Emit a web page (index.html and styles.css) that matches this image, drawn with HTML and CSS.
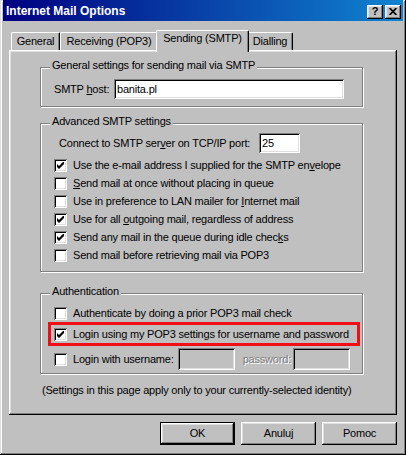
FILE: index.html
```html
<!DOCTYPE html>
<html>
<head>
  <title>Internet Mail Options</title>
  <link rel="stylesheet" href="styles.css">
</head>
<body>
  <div class="window">
    <div class="title-bar">
      <span class="title-text">Internet Mail Options</span>
      <div class="title-buttons">
        <span class="title-button">?</span>
        <span class="title-button">
          <svg width="8" height="7" viewBox="0 0 8 7"><path d="M0.6 0 L7.4 7 M7.4 0 L0.6 7" stroke="#000" stroke-width="1.7" fill="none"/></svg>
        </span>
      </div>
    </div>

    <div class="dialog-body">
      <div class="tab-strip">
        <div class="tab tab-general">General</div>
        <div class="tab tab-receiving">Receiving (POP3)</div>
        <div class="tab tab-sending active">Sending (SMTP)</div>
        <div class="tab tab-dialling">Dialling</div>
      </div>

      <div class="tab-panel">
        <div class="group group-general">
          <span class="group-label">General settings for sending mail via SMTP</span>
          <div class="field-row">
            <span class="host-label">SMTP <u>h</u>ost:</span>
            <input class="text-input host-input" type="text" value="banita.pl">
          </div>
        </div>

        <div class="group group-advanced">
          <span class="group-label">Advanced SMTP settings</span>
          <div class="field-row port-row">
            <span class="port-label">Connect to SMTP ser<u>v</u>er on TCP/IP port:</span>
            <input class="text-input port-input" type="text" value="25">
          </div>
          <div class="check-row"><span class="checkbox checked"><svg width="7" height="7" viewBox="0 0 7 7"><path d="M0 2 L2 4 L7 -1 L7 2 L2 7 L0 5 Z" fill="#000"/></svg></span><span>Use the e-mail address I supplied for the SMTP en<u>v</u>elope</span></div>
          <div class="check-row"><span class="checkbox"></span><span><u>S</u>end mail at once without placing in queue</span></div>
          <div class="check-row"><span class="checkbox"></span><span>Use in preference to LAN mailer for <u>I</u>nternet mail</span></div>
          <div class="check-row"><span class="checkbox checked"><svg width="7" height="7" viewBox="0 0 7 7"><path d="M0 2 L2 4 L7 -1 L7 2 L2 7 L0 5 Z" fill="#000"/></svg></span><span>Use for all <u>o</u>utgoing mail, regardless of address</span></div>
          <div class="check-row"><span class="checkbox checked"><svg width="7" height="7" viewBox="0 0 7 7"><path d="M0 2 L2 4 L7 -1 L7 2 L2 7 L0 5 Z" fill="#000"/></svg></span><span>Send any mail in the queue during idle chec<u>k</u>s</span></div>
          <div class="check-row"><span class="checkbox"></span><span>Send mail before retrieving mail via POP3</span></div>
        </div>

        <div class="group group-auth">
          <span class="group-label">Authentication</span>
          <div class="check-row"><span class="checkbox"></span><span>Authenticate by doing a prior POP3 mail check</span></div>
          <div class="check-row highlight"><span class="checkbox checked"><svg width="7" height="7" viewBox="0 0 7 7"><path d="M0 2 L2 4 L7 -1 L7 2 L2 7 L0 5 Z" fill="#000"/></svg></span><span>Login using my POP3 settings for username and password</span></div>
          <div class="check-row login-row">
            <span class="checkbox"></span>
            <span class="login-label">Login with username:</span>
            <input class="text-input disabled user-input" type="text" disabled>
            <span class="disabled-label">password:</span>
            <input class="text-input disabled pass-input" type="text" disabled>
          </div>
        </div>

        <div class="note">(Settings in this page apply only to your currently-selected identity)</div>
      </div>

      <div class="button-row">
        <div class="button default">OK</div>
        <div class="button">Anuluj</div>
        <div class="button">Pomoc</div>
      </div>
    </div>
  </div>
</body>
</html>
```

FILE: styles.css
```css
:root {
  /* Classic dialog palette */
  --face: #c0c0c0;
  --light: #dfdfdf;
  --highlight: #ffffff;
  --shadow: #808080;
  --dark: #000000;
  --title-start: #000080;
  --title-end: #1084d0;
  --accent-red: #f00f14;

  --font-family: "Liberation Sans", Arial, sans-serif;
}

* {
  box-sizing: border-box;
}

body {
  margin: 0;
  font-family: var(--font-family);
  font-size: 11px;
  line-height: 13px;
  letter-spacing: -0.2px;
  color: #000;
  background-color: var(--face);
}

.window {
  width: 406px;
  height: 455px;
  padding: 0 3px 3px;
  background-color: var(--face);
  box-shadow: inset -1px -1px 0 var(--dark), inset 1px 1px 0 var(--light),
    inset -2px -2px 0 var(--shadow), inset 2px 2px 0 var(--highlight);
}

/* Title bar */
.title-bar {
  display: flex;
  align-items: center;
  justify-content: space-between;
  height: 21px;
  padding: 2px 2px 0 3px;
  background: linear-gradient(to right, var(--title-start), var(--title-end));
  color: #fff;
}

.title-text {
  font-size: 12px;
  font-weight: bold;
  letter-spacing: 0;
}

.title-buttons {
  display: flex;
  gap: 2px;
}

.title-button {
  display: flex;
  align-items: center;
  justify-content: center;
  width: 16px;
  height: 14px;
  background-color: var(--face);
  color: #000;
  font-size: 11px;
  font-weight: bold;
  letter-spacing: 0;
  box-shadow: inset -1px -1px 0 var(--dark), inset 1px 1px 0 var(--highlight),
    inset -2px -2px 0 var(--shadow), inset 2px 2px 0 var(--light);
}

.dialog-body {
  padding: 0 6px;
}

/* Tabs */
.tab-strip {
  display: flex;
  align-items: flex-end;
  height: 20px;
  margin-top: 9px;
  padding-left: 2px;
}

.tab {
  height: 18px;
  padding-top: 2px;
  text-align: center;
  background-color: var(--face);
  border-top: 1px solid var(--highlight);
  border-left: 1px solid var(--highlight);
  border-right: 1px solid var(--dark);
  border-radius: 2px 2px 0 0;
  box-shadow: inset -1px 0 0 var(--shadow);
}

.tab-general { width: 49px; }
.tab-receiving { width: 98px; }
.tab-dialling { width: 46px; }

.tab-sending {
  width: 93px;
  margin: 0 -2px -2px;
}

.tab.active {
  position: relative;
  z-index: 1;
  height: 22px;
  padding-top: 1px;
}

.tab-panel {
  height: 365px;
  padding: 17px 34px 0 31px;
  box-shadow: inset -1px -1px 0 var(--dark), inset 1px 1px 0 var(--highlight),
    inset -2px -2px 0 var(--shadow), inset 2px 2px 0 var(--light);
}

/* Group boxes */
.group {
  position: relative;
  border: 1px solid var(--shadow);
  box-shadow: 1px 1px 0 var(--highlight), inset 1px 1px 0 var(--highlight);
}

.group-label {
  position: absolute;
  top: -9px;
  left: 9px;
  padding: 0 2px;
  background-color: var(--face);
}

.group-general {
  padding: 11px 0 7px 13px;
}

.group-advanced {
  margin-top: 16px;
  padding: 9px 0 7px 13px;
}

.group-auth {
  margin-top: 21px;
  padding: 10px 0 3px 13px;
}

.field-row {
  display: flex;
  align-items: center;
  height: 20px;
}

.host-label {
  width: 60px;
}

.port-row {
  padding-left: 5px;
  margin-bottom: 3px;
}

.port-label {
  width: 200px;
}

.text-input {
  height: 20px;
  margin: 0;
  padding: 0 3px;
  border: none;
  outline: none;
  font: inherit;
  letter-spacing: inherit;
  color: #000;
  background-color: #fff;
  box-shadow: inset 1px 1px 0 var(--shadow), inset -1px -1px 0 var(--highlight),
    inset 2px 2px 0 var(--dark), inset -2px -2px 0 var(--light);
}

.text-input.disabled {
  background-color: var(--face);
}

.host-input { width: 230px; }
.port-input { width: 41px; }

/* Checkboxes */
.check-row {
  display: flex;
  align-items: center;
  gap: 6px;
  height: 18px;
}

.checkbox {
  display: flex;
  align-items: center;
  justify-content: center;
  flex: none;
  width: 13px;
  height: 13px;
  background-color: #fff;
  box-shadow: inset 1px 1px 0 var(--shadow), inset -1px -1px 0 var(--highlight),
    inset 2px 2px 0 var(--dark), inset -2px -2px 0 var(--light);
}

.highlight {
  margin: 3px 5px 0 -3px;
  padding-left: 3px;
  outline: 3px solid var(--accent-red);
}

.login-row {
  height: 22px;
  margin-top: 5px;
  gap: 0;
}

.login-label {
  margin-left: 6px;
  width: 105px;
}

.user-input,
.pass-input {
  width: 57px;
  height: 22px;
}

.disabled-label {
  width: 58px;
  text-align: right;
  padding-right: 2px;
  color: var(--shadow);
  text-shadow: 1px 1px 0 var(--highlight);
}

.note {
  margin: 10px 0 0 2px;
}

/* Dialog buttons */
.button-row {
  display: flex;
  justify-content: flex-end;
  gap: 6px;
  margin-top: 7px;
}

.button {
  display: flex;
  align-items: center;
  justify-content: center;
  width: 75px;
  height: 23px;
  background-color: var(--face);
  box-shadow: inset -1px -1px 0 var(--dark), inset 1px 1px 0 var(--highlight),
    inset -2px -2px 0 var(--shadow), inset 2px 2px 0 var(--light);
}

.button.default {
  border: 1px solid var(--dark);
}
```
